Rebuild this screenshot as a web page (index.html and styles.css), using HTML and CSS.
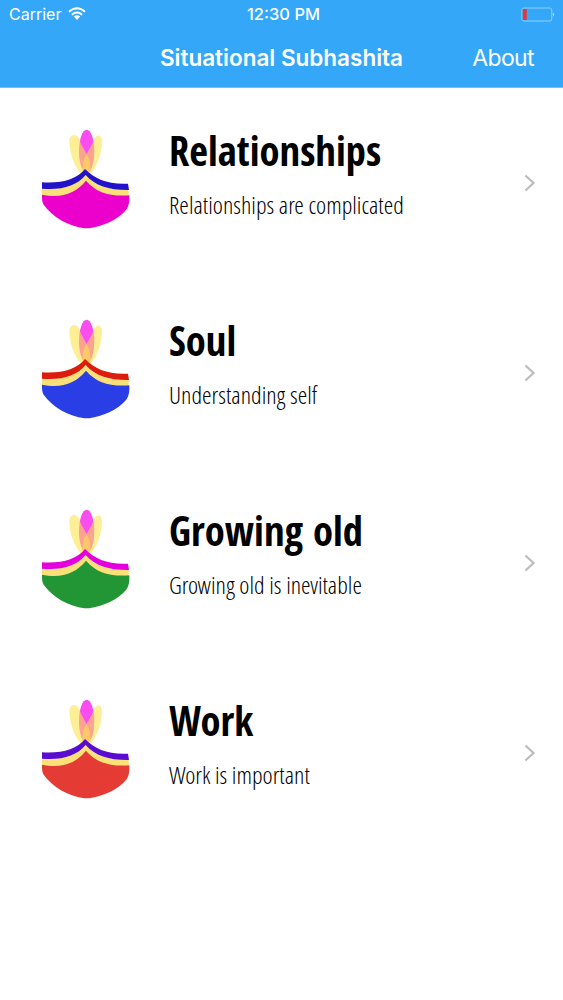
FILE: index.html
```html
<!DOCTYPE html>
<html lang="en">
<head>
    <meta charset="UTF-8">
    <meta name="viewport" content="width=device-width, initial-scale=1.0">
    <title>Situational Subhashita</title>
    <link rel="stylesheet" href="styles.css">
</head>
<body>
    <!-- Shared lamp drawing, bowl and rim colours come from the row -->
    <svg class="defs" width="0" height="0">
        <symbol id="lamp" viewBox="0 9 330 360">
            <ellipse cx="170" cy="94" rx="23" ry="65" fill="#f94df0"/>
            <path d="M118 64C118 40 142 40 148 58C156 84 176 104 180 128L182 160L152 160C132 140 118 94 118 64Z" fill="#fde34a" fill-opacity=".58"/>
            <path d="M216 64C216 42 198 42 192 58C184 84 164 104 159 128L156 160L182 160C204 140 216 94 216 64Z" fill="#fde34a" fill-opacity=".58"/>
            <path d="M36 205C90 212 140 195 167 165C195 198 240 212 296 208V226L167 240L36 226Z" fill="#fae078"/>
            <path class="rim" d="M36 187C95 191 140 178 165 147C195 178 235 194 294 191L297 210C240 211 195 198 167 165C140 198 95 211 36 206Z"/>
            <path class="bowl" d="M36 224C95 236 137 220 168 182C200 219 240 230 298 226C299 244 297 257 290 268C262 302 217 319 178 325H163C118 320 65 291 40 253C36 245 36 235 36 224Z"/>
        </symbol>
    </svg>

    <header class="header">
        <div class="status-bar">
            <div class="carrier">
                <span>Carrier</span>
                <svg class="wifi" viewBox="0 0 18 14">
                    <path d="M1 4.8Q9 -2.2 17 4.8M3.9 7.7Q9 3.3 14.1 7.7" fill="none" stroke="#fff" stroke-width="1.8"/>
                    <path d="M5.8 9.6Q9 7 12.2 9.6L9 13Z" fill="#fff"/>
                </svg>
            </div>
            <div class="time">12:30 PM</div>
            <svg class="battery" viewBox="0 0 34 15">
                <rect x=".8" y="1" width="30" height="13" rx="2" fill="none" stroke="#8fd0fb"/>
                <rect x="1.8" y="2" width="4" height="11" fill="#e0383e"/>
                <path d="M32 5.5Q34 7.5 32 9.5Z" fill="#d5f0ff"/>
            </svg>
        </div>
        <div class="nav-bar">
            <h1 class="nav-title">Situational Subhashita</h1>
            <a class="about">About</a>
        </div>
    </header>

    <main class="list">
        <div class="row relationships">
            <svg class="lamp"><use href="#lamp"/></svg>
            <div class="text">
                <h2>Relationships</h2>
                <p>Relationships are complicated</p>
            </div>
            <svg class="chevron" viewBox="0 0 12 18"><path d="M1.5 1.5L9.5 9L1.5 16.5"/></svg>
        </div>
        <div class="row soul">
            <svg class="lamp"><use href="#lamp"/></svg>
            <div class="text">
                <h2>Soul</h2>
                <p>Understanding self</p>
            </div>
            <svg class="chevron" viewBox="0 0 12 18"><path d="M1.5 1.5L9.5 9L1.5 16.5"/></svg>
        </div>
        <div class="row growing">
            <svg class="lamp"><use href="#lamp"/></svg>
            <div class="text">
                <h2>Growing old</h2>
                <p>Growing old is inevitable</p>
            </div>
            <svg class="chevron" viewBox="0 0 12 18"><path d="M1.5 1.5L9.5 9L1.5 16.5"/></svg>
        </div>
        <div class="row work">
            <svg class="lamp"><use href="#lamp"/></svg>
            <div class="text">
                <h2>Work</h2>
                <p>Work is important</p>
            </div>
            <svg class="chevron" viewBox="0 0 12 18"><path d="M1.5 1.5L9.5 9L1.5 16.5"/></svg>
        </div>
    </main>
</body>
</html>
```
FILE: styles.css
```css
body {
    margin: 0;
    background-color: #fff;
    font-family: Inter, "Liberation Sans", sans-serif;
    overflow: hidden;
}
h1, h2, p {
    margin: 0;
}
.defs {
    display: block;
}
/* Header */
.header {
    height: 88px;
    background-color: #35a7f8;
    border-bottom: 1px solid #8db9d9;
    box-sizing: border-box;
    color: #fff;
}
.status-bar {
    display: grid;
    grid-template-columns: 1fr auto 1fr;
    align-items: center;
    height: 28px;
    padding: 0 8px 0 9px;
    font-size: 16px;
}
.carrier {
    display: flex;
    align-items: center;
    gap: 7px;
}
.wifi {
    width: 18px;
    height: 14px;
}
.time {
    font-weight: 500;
    font-size: 16.5px;
    padding-left: 3px;
}
.battery {
    width: 34px;
    height: 15px;
    justify-self: end;
}
.nav-bar {
    display: grid;
    grid-template-columns: 1fr auto 1fr;
    align-items: center;
    height: 58px;
    padding: 0 29px;
}
.nav-title {
    grid-column: 2;
    font-size: 22.5px;
    font-weight: 600;
}
.about {
    justify-self: end;
    font-size: 23px;
    letter-spacing: -0.6px;
    padding-top: 1px;
}
/* List */
.row {
    display: flex;
    align-items: center;
    height: 190px;
    padding: 0 27px 0 30px;
}
.lamp {
    width: 110px;
    height: 120px;
}
.text {
    flex: 1;
    margin-left: 29px;
    padding-bottom: 22px;
    font-family: "Open Sans Condensed", "Open Sans", sans-serif;
    font-stretch: 75%;
    color: #000;
    white-space: nowrap;
}
.text h2 {
    font-size: 40.6px;
    line-height: 56px;
    font-weight: 700;
}
.text p {
    font-family: "Open Sans Condensed Light", "Open Sans", sans-serif;
    font-size: 24.4px;
    line-height: 34px;
    margin-top: 9px;
    font-weight: 300;
}
.chevron {
    width: 12px;
    height: 18px;
}
.chevron path {
    fill: none;
    stroke: #bcbcc0;
    stroke-width: 2.2;
}
/* Lamp colours */
.relationships { --bowl: #ec00cc; --rim: #2412c8; }
.soul { --bowl: #2a3ee6; --rim: #dc1c0c; }
.growing { --bowl: #229634; --rim: #e400dc; }
.work { --bowl: #e43c34; --rim: #5a0cd0; }
.rim {
    fill: var(--rim);
}
.bowl {
    fill: var(--bowl);
}
```
